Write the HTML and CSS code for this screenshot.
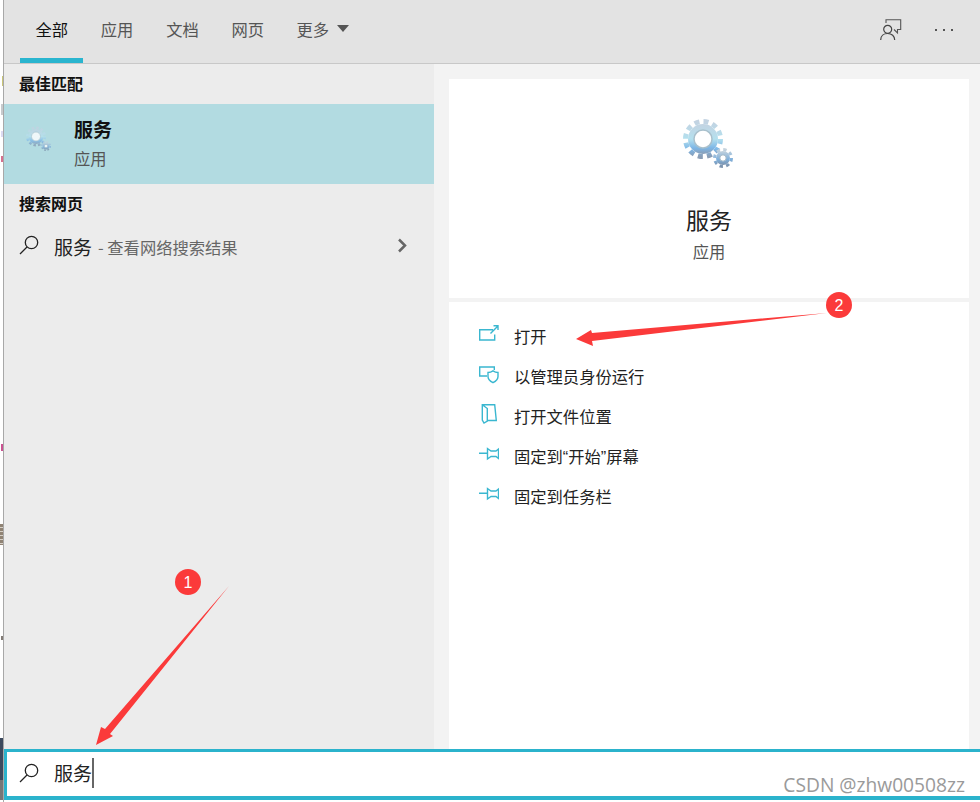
FILE: index.html
```html
<!DOCTYPE html>
<html lang="zh-CN">
<head>
<meta charset="utf-8">
<title>服务</title>
<link rel="stylesheet" href="styles.css">
</head>
<body>
<svg class="defs" width="0" height="0" aria-hidden="true">
  <defs>
    <linearGradient id="gearFill" x1="0" y1="0" x2="0" y2="1">
      <stop offset="0" stop-color="#c3d3e2"/>
      <stop offset=".5" stop-color="#b4e0ee"/>
      <stop offset=".8" stop-color="#7db6e6"/>
      <stop offset="1" stop-color="#8a9db5"/>
    </linearGradient>
    <linearGradient id="gearSmall" x1="0" y1="0" x2="0" y2="1">
      <stop offset="0" stop-color="#c4d2dc"/>
      <stop offset=".6" stop-color="#7fb0dc"/>
      <stop offset="1" stop-color="#7d93ad"/>
    </linearGradient>
    <symbol id="gears" viewBox="0 0 56 56">
      <circle cx="22" cy="27" r="15" fill="url(#gearFill)"/>
      <circle cx="22" cy="27" r="17.5" fill="none" stroke="url(#gearFill)" stroke-width="5" stroke-dasharray="5 4.16"/>
      <circle cx="22" cy="27" r="9" fill="#fff" stroke="#a9c0cc" stroke-width="1.5"/>
      <circle cx="42" cy="46" r="7" fill="url(#gearSmall)"/>
      <circle cx="42" cy="46" r="8.5" fill="none" stroke="url(#gearSmall)" stroke-width="3" stroke-dasharray="3.4 3.27"/>
      <circle cx="42" cy="46" r="3.2" fill="#fff" stroke="#9db4c4" stroke-width="1"/>
    </symbol>
    <symbol id="find" viewBox="0 0 20 20">
      <circle cx="12.5" cy="7.5" r="6.2" fill="none" stroke="#222" stroke-width="1.3"/>
      <path d="M8 12 1 19" fill="none" stroke="#222" stroke-width="1.3"/>
    </symbol>
    <symbol id="pin" viewBox="0 0 20 20">
      <path d="M0 9.300H8.500M8.500 4.500V15L12 12.500H17L19.500 14.500V5L17 7H12L8.500 4.500Z" fill="none" stroke="#3ab7d0" stroke-width="1.400"/>
    </symbol>
  </defs>
</svg>

<div class="edge">
  <i class="mark mark-a"></i><i class="mark mark-b"></i><i class="mark mark-c"></i><i class="mark mark-d"></i>
  <i class="mark mark-e"></i><i class="mark mark-f"></i><i class="mark mark-g"></i><i class="mark mark-h"></i>
</div>

<div class="window">
  <header class="topbar">
    <nav class="tabs">
      <span class="tab tab-active">全部</span>
      <span class="tab">应用</span>
      <span class="tab">文档</span>
      <span class="tab">网页</span>
      <span class="tab tab-more">更多<svg class="more-caret" width="12" height="7" viewBox="0 0 12 7"><path d="M0 0h12L6 7z" fill="#555"/></svg></span>
    </nav>
    <div class="tools">
      <svg class="feedback" width="22" height="22" viewBox="0 0 22 22">
        <path d="M6 4V.7H20.700V10.500H17.500V14L14 10.500" fill="none" stroke="#555" stroke-width="1.100"/>
        <circle cx="7.700" cy="10.300" r="4" fill="#e3e3e3" stroke="#444" stroke-width="1.200"/>
        <path d="M.7 21c0-4 3-6.500 7-6.500s7 2.500 7 6.500" fill="none" stroke="#444" stroke-width="1.200"/>
      </svg>
      <div class="dots"><i></i><i></i><i></i></div>
    </div>
  </header>

  <main class="body">
    <section class="results">
      <h2 class="section-label">最佳匹配</h2>
      <div class="best">
        <svg class="best-icon" width="28" height="28"><use href="#gears"/></svg>
        <div class="best-text">
          <div class="best-name">服务</div>
          <div class="best-kind">应用</div>
        </div>
      </div>
      <h2 class="section-label">搜索网页</h2>
      <div class="web">
        <svg class="find" width="20" height="20"><use href="#find"/></svg>
        <span class="web-term">服务</span>
        <span class="web-hint">- 查看网络搜索结果</span>
        <svg class="chevron" width="11" height="15" viewBox="0 0 11 15"><path d="M2 1.500 8 7.500 2 13.500" fill="none" stroke="#666" stroke-width="2.500"/></svg>
      </div>
    </section>

    <section class="detail">
      <div class="card card-head">
        <svg class="hero-icon" width="56" height="56"><use href="#gears"/></svg>
        <div class="hero-name">服务</div>
        <div class="hero-kind">应用</div>
      </div>
      <div class="card card-actions">
        <div class="action">
          <svg class="action-icon" width="20" height="20" viewBox="0 0 20 20"><path d="M14 5.700H.7v10.300h15V10.500M11.500 9.500 18.700 2.200M14.500 1.700h4.500v4.300" fill="none" stroke="#3ab7d0" stroke-width="1.400"/></svg>
          <span>打开</span>
        </div>
        <div class="action">
          <svg class="action-icon" width="20" height="20" viewBox="0 0 20 20"><path d="M8 12H.7V3h14.600V6" fill="none" stroke="#3ab7d0" stroke-width="1.400"/><path d="M9 8.500c2 0 3.700-.8 5-1.700 1.300.9 3 1.700 5 1.700v4c0 3-2.600 5-5 6.200-2.400-1.200-5-3.200-5-6.200z" fill="#fff" stroke="#3ab7d0" stroke-width="1.400"/></svg>
          <span>以管理员身份运行</span>
        </div>
        <div class="action">
          <svg class="action-icon" width="20" height="20" viewBox="0 0 20 20"><path d="M3.300.7H15.700L17.300 16.500H8.300M3.300.7 8.300 4.500V17L5 19 3.300 16Z" fill="none" stroke="#3ab7d0" stroke-width="1.400"/></svg>
          <span>打开文件位置</span>
        </div>
        <div class="action">
          <svg class="action-icon" width="20" height="20"><use href="#pin"/></svg>
          <span>固定到<span class="q">“</span>开始<span class="q">”</span>屏幕</span>
        </div>
        <div class="action">
          <svg class="action-icon" width="20" height="20"><use href="#pin"/></svg>
          <span>固定到任务栏</span>
        </div>
      </div>
    </section>
  </main>

  <div class="searchbar">
    <svg class="find" width="20" height="20"><use href="#find"/></svg>
    <span class="query">服务</span><i class="text-caret"></i>
    <span class="watermark">CSDN @zhw00508zz</span>
  </div>
</div>

<svg class="notes" width="980" height="802" viewBox="0 0 980 802">
  <polygon points="229,586 110,734 113,736 96,745 101,727 105,729" fill="#fb3a3a"/>
  <polygon points="827,313 592,333 591,330 576,339 593,346 592,341" fill="#fb3a3a"/>
  <circle cx="188" cy="582" r="13" fill="#fb3a3a"/>
  <circle cx="839" cy="305" r="13" fill="#fb3a3a"/>
  <text class="note-num" x="188" y="588">1</text>
  <text class="note-num" x="839" y="311">2</text>
</svg>
</body>
</html>
```

FILE: styles.css
```css
* { box-sizing: border-box; }

html, body {
  margin: 0;
  height: 802px;
  overflow: hidden;
}

body {
  position: relative;
  display: flex;
  background: #fff;
  color: #111;
  font-family: "Noto Sans CJK SC", "Noto Sans", sans-serif;
  font-size: 16.300px;
}

.defs { position: absolute; }

.edge {
  position: relative;
  flex: 0 0 4px;
  height: 802px;
  background: #fff;
  border-right: 1px solid #a8a8a8;
}

.mark { position: absolute; right: 0; width: 2px; opacity: .75; }
.mark-a { top: 76px; height: 10px; width: 1px; background: #b8b34a; }
.mark-b { top: 104px; height: 11px; width: 2px; background: #b4b8bc; }
.mark-c { top: 131px; height: 6px; background: #cfcdee; }
.mark-d { top: 156px; height: 6px; background: #c8406a; }
.mark-e { top: 444px; height: 7px; background: #b81a6e; }
.mark-f { top: 524px; height: 21px; width: 3px; background: repeating-linear-gradient(#6b5a46 0 3px, #c9c0b4 3px 4px); }
.mark-g { top: 636px; height: 4px; background: #5a5048; }
.mark-h { top: 738px; height: 62px; width: 3px; opacity: 1; background: linear-gradient(#3c4a5e 68%, #777 68%); }

.window {
  flex: 1;
  min-width: 0;
  display: flex;
  flex-direction: column;
  height: 800px;
}

/* top bar */
.topbar {
  flex: 0 0 64px;
  display: flex;
  justify-content: space-between;
  background: #e3e3e3;
  border-bottom: 1px solid #c8c8c8;
  padding-left: 16px;
}

.tabs { display: flex; gap: 2px; }

.tab {
  width: 63.400px;
  height: 63px;
  padding-bottom: 1px;
  display: flex;
  align-items: center;
  justify-content: center;
  color: #555;
  border-bottom: 5px solid transparent;
}

.tab-active { color: #111; border-bottom-color: #2ab5cf; }

.tab-more {
  width: auto;
  padding-left: 15px;
  gap: 8px;
}

.tools {
  display: flex;
  align-items: flex-start;
  padding: 19px 27px 0 0;
  gap: 33px;
}

.dots { display: flex; gap: 6px; margin-top: 10px; }
.dots i { width: 2px; height: 2px; background: #555; }

/* body */
.body { flex: 1; display: flex; min-height: 0; }

.results {
  flex: 0 0 430px;
  background: #ececec;
}

.section-label {
  margin: 0;
  height: 40px;
  padding: 0 0 2px 15px;
  display: flex;
  align-items: center;
  font-size: 16px;
  font-weight: 700;
  color: #111;
}

.best {
  height: 80px;
  display: flex;
  align-items: center;
  padding-left: 21px;
  gap: 21px;
  background: #b2dbe1;
}

.best-icon { opacity: .8; margin-top: -15px; }

.best-text { margin-top: -3px; }
.best-name { font-size: 19px; font-weight: 700; line-height: 26px; color: #111; }
.best-kind { line-height: 22px; margin-top: 5px; color: #555; }

.web {
  height: 44px;
  display: flex;
  align-items: center;
  padding: 0 26px 0 15px;
}

.find { margin-top: -2px; }

.web-term { font-size: 19px; margin-left: 15px; color: #222; }
.web-hint { margin-left: 6px; padding-top: 1px; color: #666; }
.chevron { margin-left: auto; margin-top: -2px; }

.detail {
  flex: 1;
  display: flex;
  flex-direction: column;
  gap: 4px;
  padding: 15px 11px 0 15px;
  background: #f3f3f3;
}

.card { background: #fff; }

.card-head {
  flex: 0 0 219px;
  display: flex;
  flex-direction: column;
  align-items: center;
  padding-top: 33px;
}

.hero-name { font-size: 23px; line-height: 32px; margin-top: 35px; color: #222; }
.hero-kind { line-height: 22px; margin-top: 5px; color: #555; }

.card-actions {
  flex: 1;
  padding: 15px 0 0 30px;
}

.action {
  height: 40px;
  display: flex;
  align-items: center;
  gap: 15px;
  color: #222;
}

.action > span { padding-bottom: 2px; }

.q { font-family: "Liberation Sans", sans-serif; }

.action-icon { margin-bottom: 6px; }

/* search */
.searchbar {
  position: relative;
  flex: 0 0 51px;
  display: flex;
  align-items: center;
  padding-left: 12px;
  background: #fff;
  border: solid #2bb3cc;
  border-width: 3px 0 4px 3px;
}

.query { font-size: 19px; margin-left: 15px; padding-bottom: 3px; color: #222; }
.text-caret { width: 2px; height: 30px; margin-top: -3px; background: #666; }

.watermark {
  position: absolute;
  right: 15px;
  bottom: -1px;
  font-family: "Open Sans", sans-serif;
  font-size: 19.200px;
  line-height: 24px;
  color: #9a9a9a;
}

/* annotations */
.notes {
  position: absolute;
  left: 0;
  top: 0;
  pointer-events: none;
}

.note-num {
  fill: #fff;
  font-family: "Liberation Sans", sans-serif;
  font-size: 16px;
  text-anchor: middle;
}
```
